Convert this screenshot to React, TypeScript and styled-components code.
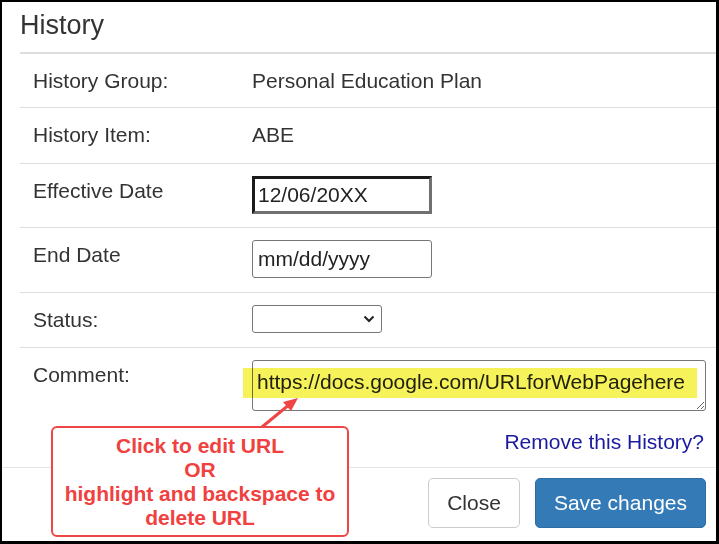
import React from 'react';
import styled, { createGlobalStyle } from 'styled-components';

const GlobalStyle = createGlobalStyle`
  html, body {
    margin: 0;
    padding: 0;
    background: #fff;
  }
  body {
    font-family: 'Liberation Sans', Arial, sans-serif;
    color: #333;
  }
`;

const Frame = styled.div`
  position: relative;
  width: 719px;
  height: 544px;
  box-sizing: border-box;
  border-style: solid;
  border-color: #000;
  border-width: 2px 3px 3px 2px;
  background: #fff;
  display: flex;
  flex-direction: column;
  overflow: hidden;
`;

const Body = styled.div`
  margin-left: 18px;
`;

const Header = styled.div`
  box-sizing: border-box;
  height: 52px;
  padding-top: 8px;
  border-bottom: 2px solid #ddd;
`;

const Title = styled.h4`
  margin: 0;
  font-size: 27px;
  font-weight: 400;
  line-height: 30px;
  color: #333;
`;

const Row = styled.div<{ $h?: number }>`
  box-sizing: border-box;
  height: ${(p) => (p.$h ? `${p.$h}px` : 'auto')};
  display: grid;
  grid-template-columns: 219px 1fr;
  align-items: start;
  padding: 12px 0 0 13px;
  border-bottom: 1px solid #ddd;
  font-size: 21px;
  line-height: 30px;
`;

const Label = styled.div`
  color: #333;
`;

const Value = styled.div`
  color: #333;
`;

const DateInput = styled.input<{ $focused?: boolean }>`
  box-sizing: border-box;
  width: 180px;
  height: 38px;
  font-family: 'Liberation Sans', Arial, sans-serif;
  font-size: 21px;
  color: #222;
  background: #fff;
  outline: none;
  border-style: solid;
  border-width: ${(p) => (p.$focused ? '3px' : '1px')};
  border-color: ${(p) => (p.$focused ? '#1a1a1a #707070 #707070 #1a1a1a' : '#767676')};
  border-radius: ${(p) => (p.$focused ? '0' : '3px')};
  padding: 0 0 0 ${(p) => (p.$focused ? '3px' : '5px')};
  margin: 0;
`;

const SelectBox = styled.div`
  box-sizing: border-box;
  width: 130px;
  height: 28px;
  border: 1px solid #767676;
  border-radius: 3px;
  display: flex;
  align-items: center;
  justify-content: flex-end;
  padding-right: 6px;
`;

const CommentCell = styled.div`
  position: relative;
  padding-right: 10px;
  display: flex;
  flex-direction: column;
`;

const CommentBox = styled.textarea`
  box-sizing: border-box;
  width: 100%;
  height: 51px;
  margin: 0;
  display: block;
  font-family: 'Liberation Sans', Arial, sans-serif;
  font-size: 21px;
  line-height: 24px;
  color: #222;
  padding: 9px 4px;
  border: 1px solid #767676;
  border-radius: 3px;
  background: #fff;
  resize: both;
  overflow: hidden;
  outline: none;
`;

const Highlight = styled.div`
  position: absolute;
  left: -9px;
  top: 8px;
  width: 454px;
  height: 30px;
  background: #f6f25a;
  mix-blend-mode: multiply;
  pointer-events: none;
`;

const CommentRow = styled.div`
  display: grid;
  grid-template-columns: 219px 1fr;
  align-items: start;
  padding: 12px 0 0 13px;
  font-size: 21px;
  line-height: 30px;
`;

const RemoveRow = styled.div`
  display: flex;
  justify-content: flex-end;
  padding: 16px 12px 10px 0;
`;

const RemoveLink = styled.a`
  font-size: 21px;
  line-height: 30px;
  color: #1a1aa0;
  text-decoration: none;
  cursor: pointer;
`;

const Footer = styled.div`
  border-top: 1px solid #e5e5e5;
  padding: 10px 10px 0 0;
  display: flex;
  justify-content: flex-end;
  gap: 15px;
`;

const Button = styled.button<{ $primary?: boolean }>`
  box-sizing: border-box;
  height: 50px;
  padding: 0 18px;
  font-family: 'Liberation Sans', Arial, sans-serif;
  font-size: 21px;
  border-radius: 5px;
  border: 1px solid ${(p) => (p.$primary ? '#2e6da4' : '#ccc')};
  background: ${(p) => (p.$primary ? '#337ab7' : '#fff')};
  color: ${(p) => (p.$primary ? '#fff' : '#333')};
  cursor: pointer;
`;

const Callout = styled.div`
  position: absolute;
  left: 49px;
  top: 424px;
  width: 298px;
  height: 111px;
  box-sizing: border-box;
  border: 2px solid #f04545;
  border-radius: 6px;
  background: #fff;
  padding-top: 6px;
  text-align: center;
  color: #f04040;
  font-weight: 700;
  font-size: 21px;
  line-height: 24px;
  white-space: nowrap;
`;

const Arrow = styled.svg`
  position: absolute;
  left: 248px;
  top: 388px;
  overflow: visible;
`;

const Chevron = () => (
  <svg width="12" height="8" viewBox="0 0 12 8">
    <path d="M1.5 1.5 L6 6 L10.5 1.5" fill="none" stroke="#222" strokeWidth="2" />
  </svg>
);

const App: React.FC = () => {
  return (
    <>
      <GlobalStyle />
      <Frame>
        <Body>
          <Header>
            <Title>History</Title>
          </Header>
          <Row $h={54}>
            <Label>History Group:</Label>
            <Value>Personal Education Plan</Value>
          </Row>
          <Row $h={56}>
            <Label>History Item:</Label>
            <Value>ABE</Value>
          </Row>
          <Row $h={64}>
            <Label>Effective Date</Label>
            <div>
              <DateInput $focused readOnly value="12/06/20XX" />
            </div>
          </Row>
          <Row $h={65}>
            <Label>End Date</Label>
            <div>
              <DateInput readOnly value="mm/dd/yyyy" />
            </div>
          </Row>
          <Row $h={55}>
            <Label>Status:</Label>
            <div>
              <SelectBox>
                <Chevron />
              </SelectBox>
            </div>
          </Row>
          <CommentRow>
            <Label>Comment:</Label>
            <CommentCell>
              <CommentBox readOnly value="https://docs.google.com/URLforWebPagehere" />
              <Highlight />
            </CommentCell>
          </CommentRow>
          <RemoveRow>
            <RemoveLink>Remove this History?</RemoveLink>
          </RemoveRow>
        </Body>
        <Footer>
          <Button>Close</Button>
          <Button $primary>Save changes</Button>
        </Footer>

        <Arrow width="56" height="40" viewBox="0 0 56 40">
          <line x1="12" y1="37" x2="40" y2="14" stroke="#f04545" strokeWidth="3" />
          <polygon points="48,8 33,12 41,21" fill="#f04545" />
        </Arrow>
        <Callout>
          Click to edit URL
          <br />
          OR
          <br />
          highlight and backspace to
          <br />
          delete URL
        </Callout>
      </Frame>
    </>
  );
};

export default App;
